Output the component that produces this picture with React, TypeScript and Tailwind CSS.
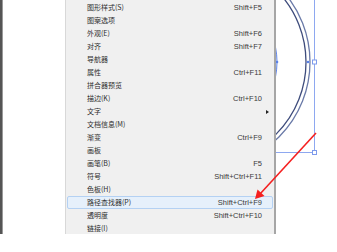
import React from "react";

type Item = { label: string; shortcut?: string; sub?: boolean; active?: boolean };

const items: Item[] = [
  { label: "图形样式(S)", shortcut: "Shift+F5" },
  { label: "图案选项" },
  { label: "外观(E)", shortcut: "Shift+F6" },
  { label: "对齐", shortcut: "Shift+F7" },
  { label: "导航器" },
  { label: "属性", shortcut: "Ctrl+F11" },
  { label: "拼合器预览" },
  { label: "描边(K)", shortcut: "Ctrl+F10" },
  { label: "文字", sub: true },
  { label: "文档信息(M)" },
  { label: "渐变", shortcut: "Ctrl+F9" },
  { label: "画板" },
  { label: "画笔(B)", shortcut: "F5" },
  { label: "符号", shortcut: "Shift+Ctrl+F11" },
  { label: "色板(H)" },
  { label: "路径查找器(P)", shortcut: "Shift+Ctrl+F9", active: true },
  { label: "透明度", shortcut: "Shift+Ctrl+F10" },
  { label: "链接(I)" },
];

export default function App() {
  return (
    <div className="relative w-[337px] h-[252px] bg-white overflow-hidden">
      {/* canvas drawing behind the menu */}
      <svg className="absolute inset-0" width="337" height="252" viewBox="0 0 337 252">
        <circle cx="204" cy="62" r="106" fill="none" stroke="#6a7aa8" strokeWidth="1.3" />
        <circle cx="204" cy="62" r="102" fill="none" stroke="#3e4c7c" strokeWidth="1.3" />
        <circle cx="204" cy="62" r="73" fill="none" stroke="#5a82e8" strokeWidth="1" />
        <line x1="314.5" y1="0" x2="314.5" y2="152.5" stroke="#8ea8f0" strokeWidth="1" />
        <line x1="276" y1="152.5" x2="314.5" y2="152.5" stroke="#8ea8f0" strokeWidth="1" />
        <rect x="312.5" y="60" width="4" height="4" fill="white" stroke="#7d9aec" strokeWidth="1" />
        <rect x="312.5" y="150.5" width="4" height="4" fill="white" stroke="#7d9aec" strokeWidth="1" />
        <circle cx="308" cy="62" r="1.3" fill="#5a82e8" />
        <circle cx="277" cy="62" r="1.3" fill="#5a82e8" />
      </svg>

      <div className="relative flex items-start">
        <div className="w-[3px] h-[234px] bg-[#555555] border-r border-[#9a9a9a]" />
        <div
          className="ml-[62px] w-[211px] h-[234px] bg-[#f0f0f0] border-l border-[#d8d8d8] border-r-2 border-r-[#a6a6a6] pt-[1px] overflow-hidden"
          style={{ fontFamily: '"Liberation Sans", "Noto Sans CJK SC", sans-serif' }}
        >
          {items.map((it) => (
            <div
              key={it.label}
              className={
                it.active
                  ? "ml-[1px] mr-[1px] flex items-center h-[13px] border border-[#b4d1f3] rounded-[2px] bg-[#e6f0fb]"
                  : "ml-[1px] mr-[1px] flex items-center h-[13px] border border-transparent"
              }
            >
              <span
                className="flex-1 pl-[19px] text-[7px] leading-none text-[#2e2e2e]"
                style={{ fontFamily: '"Noto Sans CJK SC", sans-serif' }}
              >
                {it.label}
              </span>
              {it.shortcut && (
                <span className="text-[7.5px] leading-none text-[#3a3a3a]">{it.shortcut}</span>
              )}
              <span className="w-[10px] flex items-center justify-center">
                {it.sub && (
                  <span className="w-0 h-0 border-y-[2.5px] border-y-transparent border-l-[3px] border-l-[#222]" />
                )}
              </span>
            </div>
          ))}
        </div>
      </div>

      {/* red annotation arrow over the menu */}
      <svg className="absolute inset-0 pointer-events-none" width="337" height="252" viewBox="0 0 337 252">
        <line x1="316" y1="133" x2="260" y2="194" stroke="#f52020" strokeWidth="1.6" />
        <polygon points="255,199 257.5,189.5 264.5,196" fill="#f52020" />
      </svg>
    </div>
  );
}
